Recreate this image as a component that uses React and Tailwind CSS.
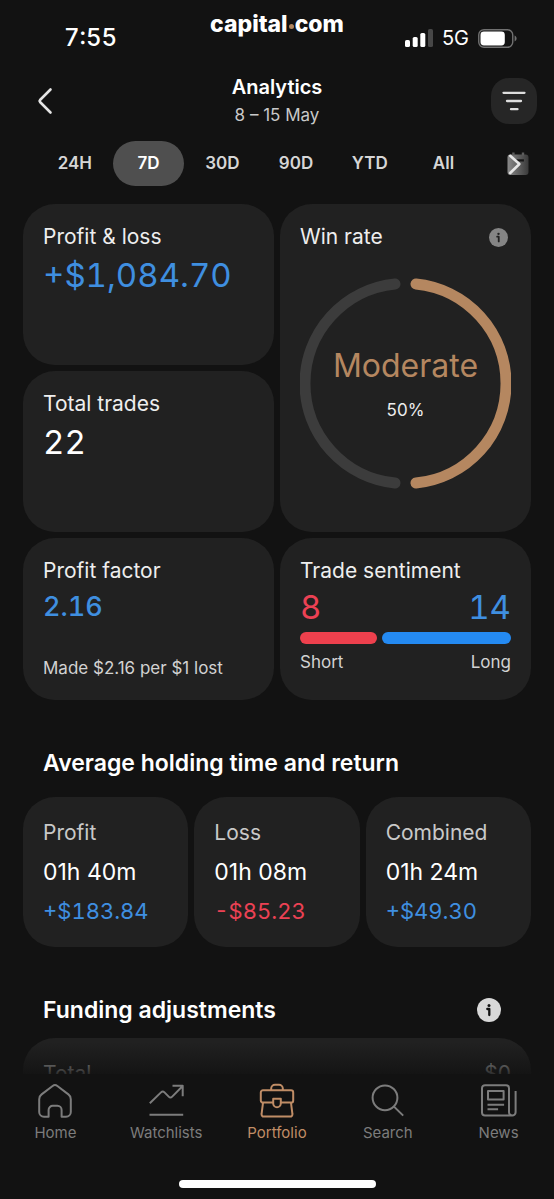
import React from "react";

const ranges = ["24H", "7D", "30D", "90D", "YTD", "All"];

const holding = [
  { label: "Profit", time: "01h 40m", amount: "+$183.84", tone: "text-[#3f8fe0]" },
  { label: "Loss", time: "01h 08m", amount: "-$85.23", tone: "text-[#ec4154]" },
  { label: "Combined", time: "01h 24m", amount: "+$49.30", tone: "text-[#3f8fe0]" },
];

function StatusBar() {
  return (
    <header className="grid h-[76px] grid-cols-3 items-center">
      <time className="pl-16 text-[24px] leading-7 font-medium text-white tabular-nums">7:55</time>
      <div className="-mt-7 flex items-center justify-center text-[23px] leading-8 font-extrabold text-white">
        <span>capital</span>
        <span className="mx-px mt-1 size-[5px] rounded-full bg-[#b08660]" />
        <span>com</span>
      </div>
      <div className="flex items-center justify-end gap-[9px] pr-[37px]">
        <svg className="h-[18px] w-7" viewBox="0 0 28 18" aria-hidden="true">
          <rect x="0" y="11" width="5" height="7" rx="1.6" fill="#fff" />
          <rect x="7.7" y="8" width="5" height="10" rx="1.6" fill="#fff" />
          <rect x="15.3" y="4" width="5" height="14" rx="1.6" fill="#fff" />
          <rect x="23" y="0" width="5" height="18" rx="1.6" fill="#474747" />
        </svg>
        <span className="text-[20px] leading-6 text-white">5G</span>
        <svg className="h-[19px] w-[39px]" viewBox="0 0 39 19" aria-hidden="true">
          <rect x="0.75" y="0.75" width="34" height="17.5" rx="5.2" fill="none" stroke="#717171" strokeWidth="1.4" />
          <rect x="2.5" y="2.6" width="24.3" height="13.8" rx="3.4" fill="#fff" />
          <path d="M36.6 6.6c1.3.6 2 1.6 2 2.9s-.7 2.3-2 2.9z" fill="#717171" />
        </svg>
      </div>
    </header>
  );
}

function InfoIcon({ className, fill, ink }) {
  return (
    <svg className={className} viewBox="0 0 24 24" aria-hidden="true">
      <circle cx="12" cy="12" r="12" fill={fill} />
      <circle cx="12" cy="7.4" r="1.5" fill={ink} />
      <path d="M10.3 11h2v6" fill="none" stroke={ink} strokeWidth="2.3" strokeLinecap="round" strokeLinejoin="round" />
    </svg>
  );
}

function Card({ className = "", children }) {
  return <section className={`rounded-[32px] bg-[#212121] px-5 ${className}`}>{children}</section>;
}

function CardTitle({ children }) {
  return <h2 className="text-[21px] leading-7 font-normal text-[#eeeeee]">{children}</h2>;
}

const navItems = [
  {
    label: "Home",
    icon: <path d="M3.6 11.4 14.6 3a4 4 0 0 1 4.8 0l11 8.4a6 6 0 0 1 2.4 4.8V29a4.8 4.8 0 0 1-4.8 4.8h-4.4V27a4.2 4.2 0 0 0-4.2-4.2h-4.4A4.2 4.2 0 0 0 10.6 27v6.8H6A4.8 4.8 0 0 1 1.2 29V16.2A6 6 0 0 1 3.6 11.4Z" />,
  },
  {
    label: "Watchlists",
    icon: <path d="M.8 20.2 12 9.4a2.5 2.5 0 0 1 3.5 0l4.2 4.2a2.5 2.5 0 0 0 3.5 0L33.4 3.2M23.5 2.8h10.2v10.4M.5 31.8h33.7" />,
  },
  {
    label: "Portfolio",
    active: true,
    icon: (
      <>
        <path d="M11.2 7.2V5.6A3.8 3.8 0 0 1 15 1.8h4a3.8 3.8 0 0 1 3.8 3.8v1.6M3 7.2h28a2.2 2.2 0 0 1 2.2 2.2v8a2.2 2.2 0 0 1-2.2 2.2H21M13 19.6H3a2.2 2.2 0 0 1-2.2-2.2v-8A2.2 2.2 0 0 1 3 7.2" />
        <path d="M13.2 15.8h7.6v4.6a3.8 3.8 0 0 1-7.6 0ZM3 19.8l-1.4 11a2.3 2.3 0 0 0 2.3 2.8h26.2a2.3 2.3 0 0 0 2.3-2.8L31 19.8" />
      </>
    ),
  },
  {
    label: "Search",
    icon: (
      <>
        <circle cx="14" cy="14.8" r="12.4" />
        <path d="m23 23.6 9.2 9" />
      </>
    ),
  },
  {
    label: "News",
    icon: (
      <>
        <path d="M30.4 32.6H3a3 3 0 0 1-3-3V5.2a3 3 0 0 1 3-3h21a3 3 0 0 1 3 3v24a3.3 3.3 0 0 0 6.6 0V8" />
        <path d="M6 8h15.6v8.6H6ZM5.5 21.7h16.6M5.5 26.2h10.6" />
      </>
    ),
  },
];

export default function App() {
  return (
    <div className="flex h-screen flex-col overflow-hidden bg-[#121212] font-['Inter','Liberation_Sans',sans-serif]">
      <StatusBar />

      <div className="mt-px flex h-12 items-center justify-between pr-[17px] pl-[37px]">
        <button type="button" aria-label="Back" className="flex h-12 w-[46px] items-center">
          <svg className="h-7 w-4" viewBox="0 0 16 28" fill="none" stroke="#e4e4e4" strokeWidth="2.6" strokeLinecap="round" strokeLinejoin="round" aria-hidden="true">
            <path d="M13.5 2.5 3 13a1.5 1.5 0 0 0 0 2l10.5 10.5" />
          </svg>
        </button>
        <div className="pr-5 text-center">
          <h1 className="text-[20px] leading-7 font-semibold text-white">Analytics</h1>
          <p className="text-[17px] leading-7 text-[#c9c9c9]">8 – 15 May</p>
        </div>
        <button type="button" aria-label="Filter" className="flex size-[46px] items-center justify-center rounded-[18px] bg-[#262626]">
          <svg className="h-5 w-6" viewBox="0 0 24 20" stroke="#dedede" strokeWidth="2.3" strokeLinecap="round" aria-hidden="true">
            <path d="M1.5 1.8h21M5 10h14M9 18.2h6.5" />
          </svg>
        </button>
      </div>

      <div className="mt-4 flex h-[45px] shrink-0 pl-[38px]">
        {ranges.map((r) => (
          <button
            key={r}
            type="button"
            aria-pressed={r === "7D"}
            className={
              r === "7D"
                ? "mx-px min-w-0 flex-1 rounded-full bg-[#4f4f4f] text-[17px] font-semibold text-white"
                : "mx-px min-w-0 flex-1 rounded-full text-[17px] font-semibold text-[#d6d6d6]"
            }
          >
            {r}
          </button>
        ))}
        <button type="button" aria-label="Custom dates" className="mx-px flex min-w-0 flex-1 items-center justify-center">
          <svg className="h-6 w-6" viewBox="0 0 24 24" fill="none" aria-hidden="true">
            <defs>
              <linearGradient id="calendar-fade" x1="0" x2="1" y1="0" y2="0">
                <stop offset="0" stopColor="#8a8a8a" />
                <stop offset="1" stopColor="#3a3a3a" />
              </linearGradient>
            </defs>
            <rect x="2.5" y="2.5" width="21" height="20.5" rx="3" fill="url(#calendar-fade)" />
            <path d="M8.4 .6v3M18 .6v3" stroke="#5c5c5c" strokeWidth="2.4" />
            <path d="M11.5 8.4h7.4" stroke="#161616" strokeWidth="2.2" />
            <path d="M5.2 3.8 14.4 12l-9.2 9" stroke="#e6e6e6" strokeWidth="2.6" strokeLinecap="round" strokeLinejoin="round" />
          </svg>
        </button>
      </div>

      <main className="relative min-h-0 flex-1 overflow-hidden px-[23px] pt-[18px]">
        <div className="grid grid-cols-2 grid-rows-[161px_161px_162px] gap-[6px]">
          <Card className="pt-[19px]">
            <CardTitle>Profit &amp; loss</CardTitle>
            <p className="mt-[2px] text-[33px] leading-[44px] text-[#3f8fe0] tabular-nums">+$1,084.70</p>
          </Card>

          <Card className="row-span-2 pt-[19px]">
            <div className="flex items-center justify-between">
              <CardTitle>Win rate</CardTitle>
              <button type="button" aria-label="About win rate" className="mr-[3px]">
                <InfoIcon className="size-[19px]" fill="#858585" ink="#212121" />
              </button>
            </div>
            <div className="mt-[27px] grid items-center justify-items-center">
              <svg className="col-start-1 row-start-1 w-full" viewBox="0 0 212 212" fill="none" strokeWidth="11" strokeLinecap="round" aria-hidden="true">
                <path d="M95.5 6a100.5 100.5 0 0 0 0 200" stroke="#3c3c3c" />
                <path d="M116.5 6a100.5 100.5 0 0 1 0 200" stroke="#b58760" />
              </svg>
              <div className="col-start-1 row-start-1 text-center">
                <p className="text-[32px] leading-10 text-[#b58760]">Moderate</p>
                <p className="mt-3 text-[17px] leading-6 text-[#ededed]">50%</p>
              </div>
            </div>
          </Card>

          <Card className="pt-[19px]">
            <CardTitle>Total trades</CardTitle>
            <p className="mt-[2px] text-[33px] leading-[44px] text-white tabular-nums">22</p>
          </Card>

          <Card className="pt-[19px]">
            <CardTitle>Profit factor</CardTitle>
            <p className="mt-1 text-[27px] leading-9 font-medium text-[#3f8fe0] tabular-nums">2.16</p>
            <p className="mt-[31px] text-[17px] leading-6 text-[#d2d2d2]">Made $2.16 per $1 lost</p>
          </Card>

          <Card className="pt-[19px]">
            <CardTitle>Trade sentiment</CardTitle>
            <div className="flex justify-between text-[33px] leading-[44px] tabular-nums">
              <span className="text-[#ec4154]">8</span>
              <span className="text-[#3f8fe0]">14</span>
            </div>
            <div className="mt-[3px] flex gap-[5px]">
              <div className="h-3 flex-[3] rounded-full bg-[#ee404d]" />
              <div className="h-3 flex-[5] rounded-full bg-[#248af2]" />
            </div>
            <div className="mt-[6px] flex justify-between text-[17px] leading-6 text-[#d2d2d2]">
              <span>Short</span>
              <span>Long</span>
            </div>
          </Card>
        </div>

        <h2 className="mt-[49px] px-5 text-[23px] leading-7 font-semibold text-white">Average holding time and return</h2>
        <div className="mt-5 grid grid-cols-3 gap-[6px]">
          {holding.map((h) => (
            <Card key={h.label} className="h-[150px] pt-[22px]">
              <h3 className="text-[21px] leading-7 text-[#c9c9c9]">{h.label}</h3>
              <p className="mt-[11px] text-[23px] leading-7 text-white">{h.time}</p>
              <p className={`mt-[11px] text-[22px] leading-7 tabular-nums ${h.tone}`}>{h.amount}</p>
            </Card>
          ))}
        </div>

        <div className="mt-[49px] flex items-center justify-between pr-[30px] pl-5">
          <h2 className="text-[23px] leading-7 font-semibold text-white">Funding adjustments</h2>
          <button type="button" aria-label="About funding adjustments">
            <InfoIcon className="size-6" fill="#d8d8d8" ink="#121212" />
          </button>
        </div>
        <Card className="mt-[14px] flex h-[150px] justify-between pt-[22px] text-[21px] leading-7 text-[#c9c9c9]">
          <span>Total</span>
          <span>$0</span>
        </Card>
        <div className="pointer-events-none absolute inset-x-0 bottom-0 h-8 bg-linear-to-b from-transparent to-[#121212]/85" />
      </main>

      <nav className="flex h-[125px] shrink-0 flex-col justify-between bg-[#121212] pt-[9px] pb-[11px]">
        <div className="flex">
          {navItems.map((item) => (
            <a
              key={item.label}
              href={`#${item.label.toLowerCase()}`}
              className={
                item.active
                  ? "flex min-w-0 flex-1 flex-col items-center text-[#c08d66]"
                  : "flex min-w-0 flex-1 flex-col items-center text-[#7c7c7c]"
              }
            >
              <svg className="h-9 w-[34px] overflow-visible" viewBox="0 0 34 36" fill="none" stroke="currentColor" strokeWidth="2" strokeLinejoin="round" aria-hidden="true">
                {item.icon}
              </svg>
              <span className="mt-1 text-[15px] leading-5">{item.label}</span>
            </a>
          ))}
        </div>
        <div className="h-2 w-[197px] self-center rounded-full bg-white" />
      </nav>
    </div>
  );
}
